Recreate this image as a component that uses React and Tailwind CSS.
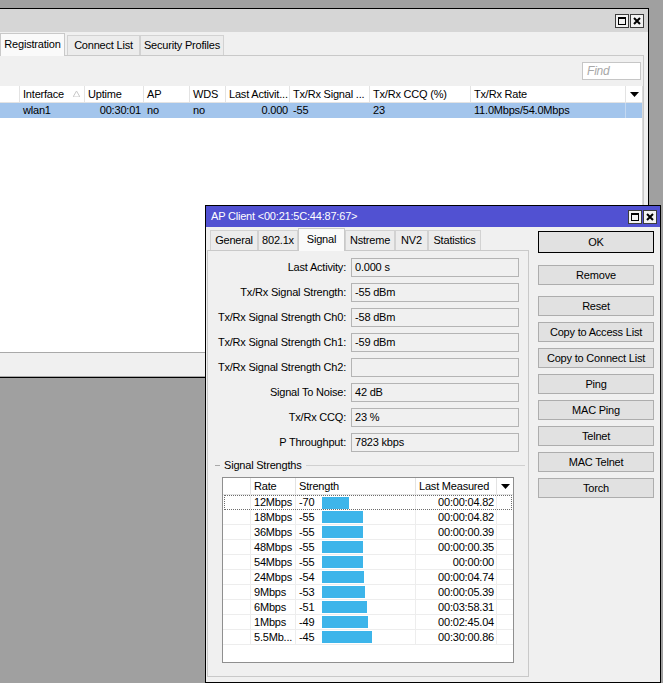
import React from "react";

const mainCols = [
  { name: "", w: 20 },
  { name: "Interface", w: 65, sort: true },
  { name: "Uptime", w: 59 },
  { name: "AP", w: 46 },
  { name: "WDS", w: 36 },
  { name: "Last Activit...", w: 64 },
  { name: "Tx/Rx Signal ...", w: 80 },
  { name: "Tx/Rx CCQ (%)", w: 101 },
  { name: "Tx/Rx Rate", w: 155 },
];

const fields = [
  ["Last Activity:", "0.000 s"],
  ["Tx/Rx Signal Strength:", "-55 dBm"],
  ["Tx/Rx Signal Strength Ch0:", "-58 dBm"],
  ["Tx/Rx Signal Strength Ch1:", "-59 dBm"],
  ["Tx/Rx Signal Strength Ch2:", ""],
  ["Signal To Noise:", "42 dB"],
  ["Tx/Rx CCQ:", "23 %"],
  ["P Throughput:", "7823 kbps"],
];

const rates = [
  ["12Mbps", "-70", 27, "00:00:04.82"],
  ["18Mbps", "-55", 41, "00:00:04.82"],
  ["36Mbps", "-55", 41, "00:00:00.39"],
  ["48Mbps", "-55", 41, "00:00:00.35"],
  ["54Mbps", "-55", 41, "00:00:00"],
  ["24Mbps", "-54", 42, "00:00:04.74"],
  ["9Mbps", "-53", 43, "00:00:05.39"],
  ["6Mbps", "-51", 45, "00:03:58.31"],
  ["1Mbps", "-49", 46, "00:02:45.04"],
  ["5.5Mb...", "-45", 50, "00:30:00.86"],
];

const buttons = ["Copy to Access List", "Copy to Connect List", "Ping", "MAC Ping", "Telnet", "MAC Telnet", "Torch"];

function WinButtons() {
  return (
    <div className="flex gap-[1px]">
      <div className="w-[14px] h-[14px] border border-[#3c3c3c] bg-[#f2f2f2] flex items-center justify-center">
        <div className="w-[8px] h-[8px] border border-black border-t-2" />
      </div>
      <div className="w-[14px] h-[14px] border border-[#3c3c3c] bg-[#f2f2f2] flex items-center justify-center">
        <svg width="8" height="8" viewBox="0 0 8 8">
          <path d="M1 1 L7 7 M7 1 L1 7" stroke="black" strokeWidth="2" />
        </svg>
      </div>
    </div>
  );
}

function DownArrow() {
  return (
    <svg width="9" height="5" viewBox="0 0 9 5">
      <path d="M0 0 H9 L4.5 5 Z" fill="black" />
    </svg>
  );
}

function Tab({ label, active, w }) {
  return active ? (
    <div
      className="h-[23px] flex items-center justify-center bg-[#fafafa] border border-b-0 border-[#c9c9c9] relative z-10 -mb-[1px] pb-[2px]"
      style={{ width: w }}
    >
      {label}
    </div>
  ) : (
    <div
      className="h-[20px] flex items-center justify-center bg-[#ececec] border border-b-0 border-[#d2d2d2]"
      style={{ width: w }}
    >
      {label}
    </div>
  );
}

export default function App() {
  return (
    <div className="relative w-[663px] h-[683px] bg-[#a0a0a0] overflow-hidden font-['Liberation_Sans',Arial,sans-serif] text-[11px] tracking-[-0.2px] text-black leading-none whitespace-nowrap">
      {/* Main wireless window */}
      <div className="absolute left-[-1px] top-[8px] w-[650px] h-[370px] border border-black bg-[#f0f0f0] flex flex-col">
        <div className="h-[23px] bg-[#d6d6d6] flex items-center justify-end pr-[4px]">
          <WinButtons />
        </div>
        <div className="flex-1 flex flex-col pr-[4px]">
          <div className="h-[23px] flex items-end">
            <Tab label="Registration" active w={65} />
            <div className="w-[2px]" />
            <Tab label="Connect List" w={73} />
            <Tab label="Security Profiles" w={84} />
          </div>
          <div className="flex-1 border-t border-r border-[#c9c9c9] flex flex-col">
            <div className="h-[30px] flex items-center justify-end pr-[2px]">
              <div className="w-[59px] h-[18px] bg-white border border-[#c6c6c6] flex items-center pl-[4px] italic text-[#a8a8a8] text-[12px]">
                Find
              </div>
            </div>
            <div className="h-[266px] bg-white border-r border-[#d9d9d9] flex flex-col">
              <div className="h-[17px] flex border-b border-[#e3e3e3]">
                {mainCols.map((c, i) => (
                  <div
                    key={i}
                    className="h-full border-r border-[#e3e3e3] flex items-center pl-[3px] relative overflow-hidden"
                    style={{ width: c.w }}
                  >
                    {c.name}
                    {c.sort && (
                      <svg className="absolute right-[4px] top-[5px]" width="7" height="6" viewBox="0 0 7 6">
                        <path d="M3.5 0 L7 6 H0 Z" fill="none" stroke="#c8c8c8" />
                      </svg>
                    )}
                  </div>
                ))}
                <div className="flex-1 flex items-center justify-center">
                  <DownArrow />
                </div>
              </div>
              <div className="h-[15px] flex bg-[#a3c5ec]">
                <div className="w-[20px]" />
                <div className="w-[65px] pl-[3px] flex items-center">wlan1</div>
                <div className="w-[59px] pr-[3px] flex items-center justify-end">00:30:01</div>
                <div className="w-[46px] pl-[3px] flex items-center">no</div>
                <div className="w-[36px] pl-[3px] flex items-center">no</div>
                <div className="w-[64px] pr-[2px] flex items-center justify-end">0.000</div>
                <div className="w-[80px] pl-[3px] flex items-center">-55</div>
                <div className="w-[101px] pl-[3px] flex items-center">23</div>
                <div className="w-[155px] pl-[3px] flex items-center border-r border-[#c3d8f1]">11.0Mbps/54.0Mbps</div>
              </div>
            </div>
            <div className="flex-1 border-t border-[#a9a9a9] border-b" />
          </div>
        </div>
      </div>

      {/* AP Client dialog */}
      <div className="absolute left-[205px] top-[205px] w-[456px] h-[478px] border border-black bg-[#f0f0f0] flex flex-col">
        <div className="h-[21px] bg-[#5151d2] flex items-center justify-between pl-[5px] pr-[3px]">
          <span className="text-white text-[11px]">AP Client &lt;00:21:5C:44:87:67&gt;</span>
          <WinButtons />
        </div>
        <div className="flex-1 flex">
          <div className="w-[322px] ml-[1px] mt-[1px] mb-[5px] flex flex-col">
            <div className="h-[22px] flex items-end pl-[3px]">
              <Tab label="General" w={48} />
              <Tab label="802.1x" w={40} />
              <Tab label="Signal" active w={47} />
              <Tab label="Nstreme" w={50} />
              <Tab label="NV2" w={33} />
              <Tab label="Statistics" w={53} />
            </div>
            <div className="flex-1 border border-[#c9c9c9] flex flex-col pt-[7px]">
              <div className="flex flex-col gap-[6px]">
                {fields.map(([label, value]) => (
                  <div key={label} className="h-[19px] flex items-center">
                    <div className="w-[138px] text-right">{label}</div>
                    <div className="ml-[5px] w-[168px] h-[19px] border border-[#b4b4b4] flex items-center pl-[3px]">
                      {value}
                    </div>
                  </div>
                ))}
              </div>
              <div className="mt-[6px] h-[14px] flex items-center pl-[7px] pr-[3px]">
                <div className="w-[5px] border-t border-[#a9a9a9]" />
                <span className="px-[4px]">Signal Strengths</span>
                <div className="flex-1 border-t border-[#d0d0d0]" />
              </div>
              <div className="mt-[5px] ml-[14px] w-[292px] h-[186px] border border-[#8f8f8f] bg-white flex flex-col">
                <div className="h-[17px] flex border-b border-[#e3e3e3]">
                  <div className="w-[28px] border-r border-[#e3e3e3]" />
                  <div className="w-[45px] border-r border-[#e3e3e3] pl-[3px] flex items-center">Rate</div>
                  <div className="w-[120px] border-r border-[#e3e3e3] pl-[3px] flex items-center">Strength</div>
                  <div className="w-[81px] border-r border-[#e3e3e3] pl-[3px] flex items-center">Last Measured</div>
                  <div className="flex-1 flex items-center justify-center">
                    <DownArrow />
                  </div>
                </div>
                {rates.map(([rate, str, bw, time], i) => (
                  <div
                    key={rate}
                    className={`h-[15px] flex border-b ${i === 0 ? "border border-dotted border-[#6d6d6d] mx-[1px]" : "border-[#ededed]"}`}
                  >
                    <div className={`${i === 0 ? "w-[26px]" : "w-[28px]"} border-r border-[#ededed]`} />
                    <div className="w-[45px] border-r border-[#ededed] pl-[3px] flex items-center">{rate}</div>
                    <div className="w-[120px] border-r border-[#ededed] pl-[3px] flex items-center">
                      <span className="w-[23px]">{str}</span>
                      <div className="h-[12px] bg-[#3db5ea]" style={{ width: bw }} />
                    </div>
                    <div className="w-[81px] border-r border-[#ededed] pr-[2px] flex items-center justify-end">{time}</div>
                  </div>
                ))}
              </div>
            </div>
          </div>
          <div className="ml-[9px] mt-[4px] w-[116px] flex flex-col">
            <div className="h-[22px] border border-black bg-[#e1e1e1] flex items-center justify-center">OK</div>
            <div className="mt-[12px] h-[20px] border border-[#adadad] bg-[#e1e1e1] flex items-center justify-center">Remove</div>
            <div className="mt-[11px] h-[20px] border border-[#adadad] bg-[#e1e1e1] flex items-center justify-center">Reset</div>
            <div className="mt-[6px] flex flex-col gap-[6px]">
              {buttons.map((b) => (
                <div key={b} className="h-[20px] border border-[#adadad] bg-[#e1e1e1] flex items-center justify-center">
                  {b}
                </div>
              ))}
            </div>
          </div>
        </div>
      </div>
    </div>
  );
}
